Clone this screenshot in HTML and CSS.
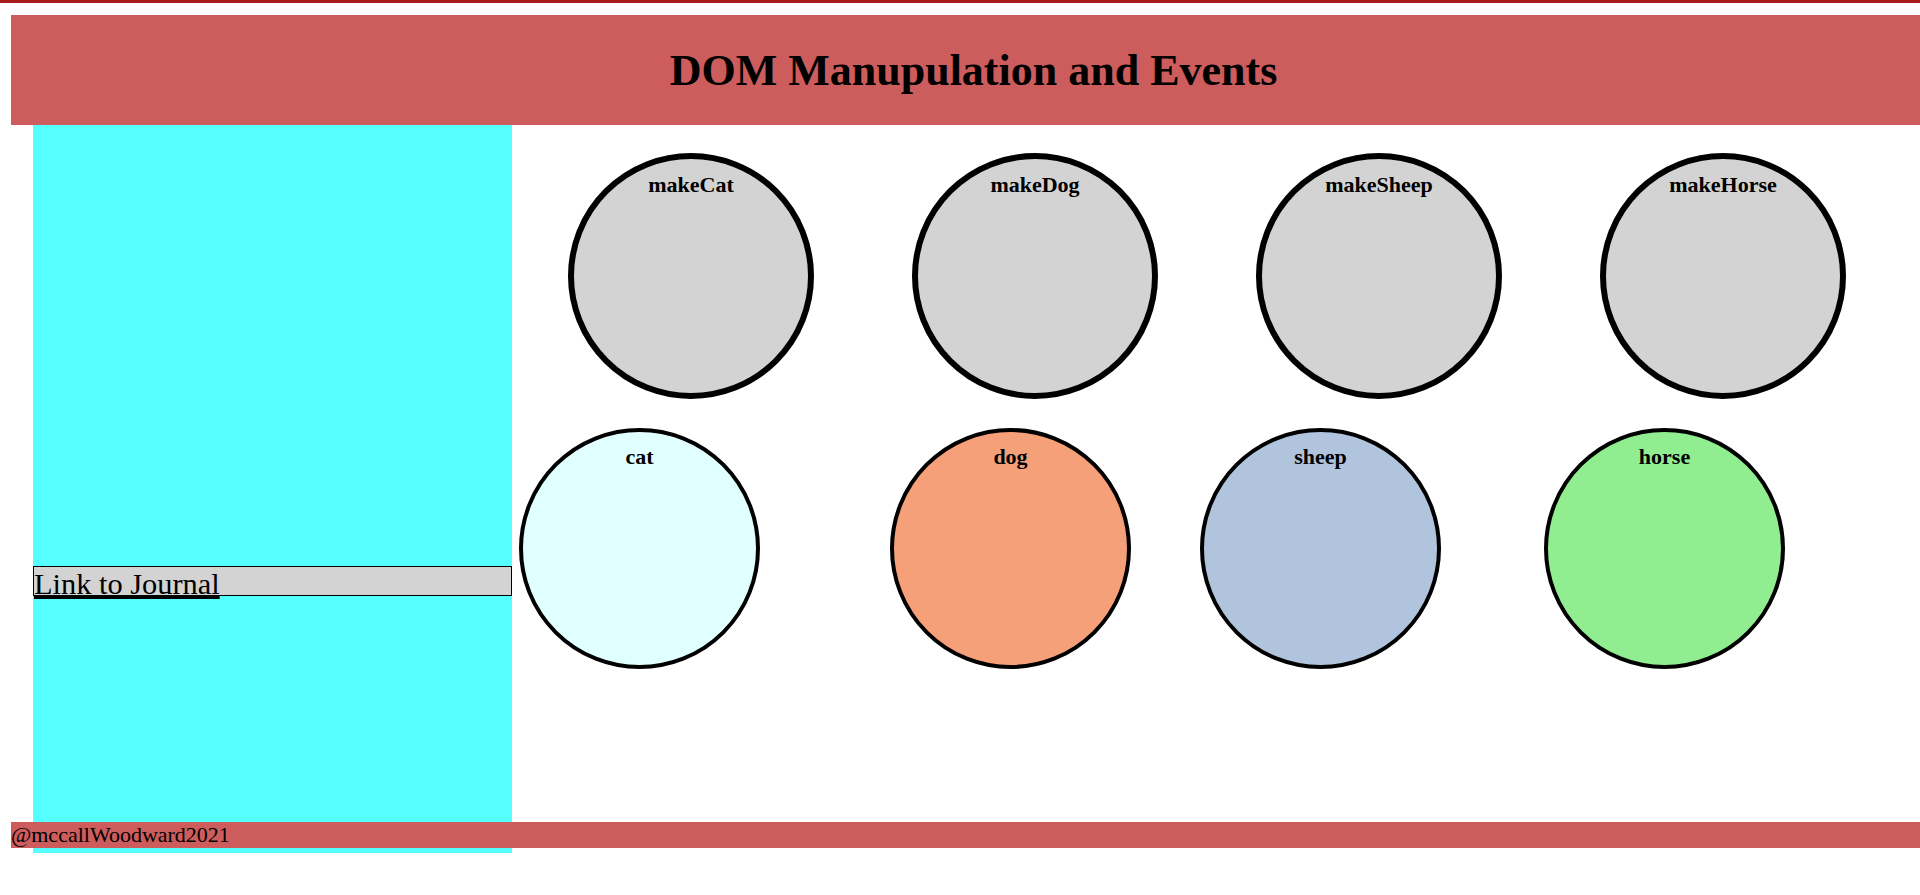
FILE: index.html
```html
<!DOCTYPE html>
<html lang="en">
<head>
    <meta charset="UTF-8">
    <meta name="viewport" content="width=device-width, initial-scale=1.0">
    <title>DOM Manupulation and Events</title>
    <link rel="stylesheet" href="styles.css">
</head>
<body>
    <div class="top-rule"></div>
    <div class="page">
        <header class="site-header">
            <h1>DOM Manupulation and Events</h1>
        </header>

        <aside class="sidebar">
            <div class="journal">
                <a href="#">Link to Journal</a>
            </div>
        </aside>

        <section class="stage">
            <div class="make-row">
                <div class="maker" id="makeCat"><h3>makeCat</h3></div>
                <div class="maker" id="makeDog"><h3>makeDog</h3></div>
                <div class="maker" id="makeSheep"><h3>makeSheep</h3></div>
                <div class="maker" id="makeHorse"><h3>makeHorse</h3></div>
            </div>
            <div class="animal-row">
                <div class="animal cat"><h3>cat</h3></div>
                <div class="animal dog"><h3>dog</h3></div>
                <div class="animal sheep"><h3>sheep</h3></div>
                <div class="animal horse"><h3>horse</h3></div>
            </div>
        </section>

        <footer class="site-footer">@mccallWoodward2021</footer>
    </div>
</body>
</html>
```

FILE: styles.css
```css
    body {
        margin: 0;
        font-family: "Liberation Serif", "Times New Roman", serif;
        color: black;
        background-color: white;
    }

    .top-rule {
        height: 3px;
        background-color: #a51d1f;
    }

    /* sidebar runs one row past the footer, footer lies over it */
    .page {
        display: grid;
        grid-template-columns: 22px 479px 1fr;
        grid-template-rows: 110px 697px 26px 5px;
        padding: 12px 0 0 11px;
    }

    .site-header {
        grid-column: 1 / -1;
        grid-row: 1;
        background-color: indianred;
        display: flex;
        align-items: center;
        justify-content: center;
        padding-left: 16px;
    }

    .site-header h1 {
        margin: 0;
        font-size: 44px;
        font-weight: bold;
    }

    .sidebar {
        grid-column: 2;
        grid-row: 2 / 5;
        background-color: #55ffff;
    }

    .journal {
        margin-top: 441px;
        height: 28px;
        border: 1px solid black;
        background-color: lightgray;
        font-size: 30.4px;
    }

    .journal a {
        color: black;
    }

    .stage {
        grid-column: 3;
        grid-row: 2;
        padding-top: 28px;
    }

    .make-row {
        display: flex;
        gap: 98px;
        padding-left: 56px;
    }

    .maker {
        width: 234px;
        height: 234px;
        border: 6px solid black;
        border-radius: 50%;
        background-color: lightgray;
        text-align: center;
    }

    .maker h3,
    .animal h3 {
        margin: 0;
        font-size: 22px;
    }

    .maker h3 {
        padding-top: 13px;
    }

    .animal-row {
        display: flex;
        margin-top: 29px;
    }

    .animal {
        width: 233px;
        height: 233px;
        border: 4px solid black;
        border-radius: 50%;
        text-align: center;
    }

    .animal h3 {
        padding-top: 12px;
    }

    .cat {
        margin-left: 7px;
        background-color: lightcyan;
    }

    .dog {
        margin-left: 130px;
        background-color: #f6a07a;
    }

    .sheep {
        margin-left: 69px;
        background-color: lightsteelblue;
    }

    .horse {
        margin-left: 103px;
        background-color: lightgreen;
    }

    .site-footer {
        grid-column: 1 / -1;
        grid-row: 3;
        position: relative;
        z-index: 1;
        line-height: 26px;
        font-size: 22px;
        background-color: indianred;
    }
```
